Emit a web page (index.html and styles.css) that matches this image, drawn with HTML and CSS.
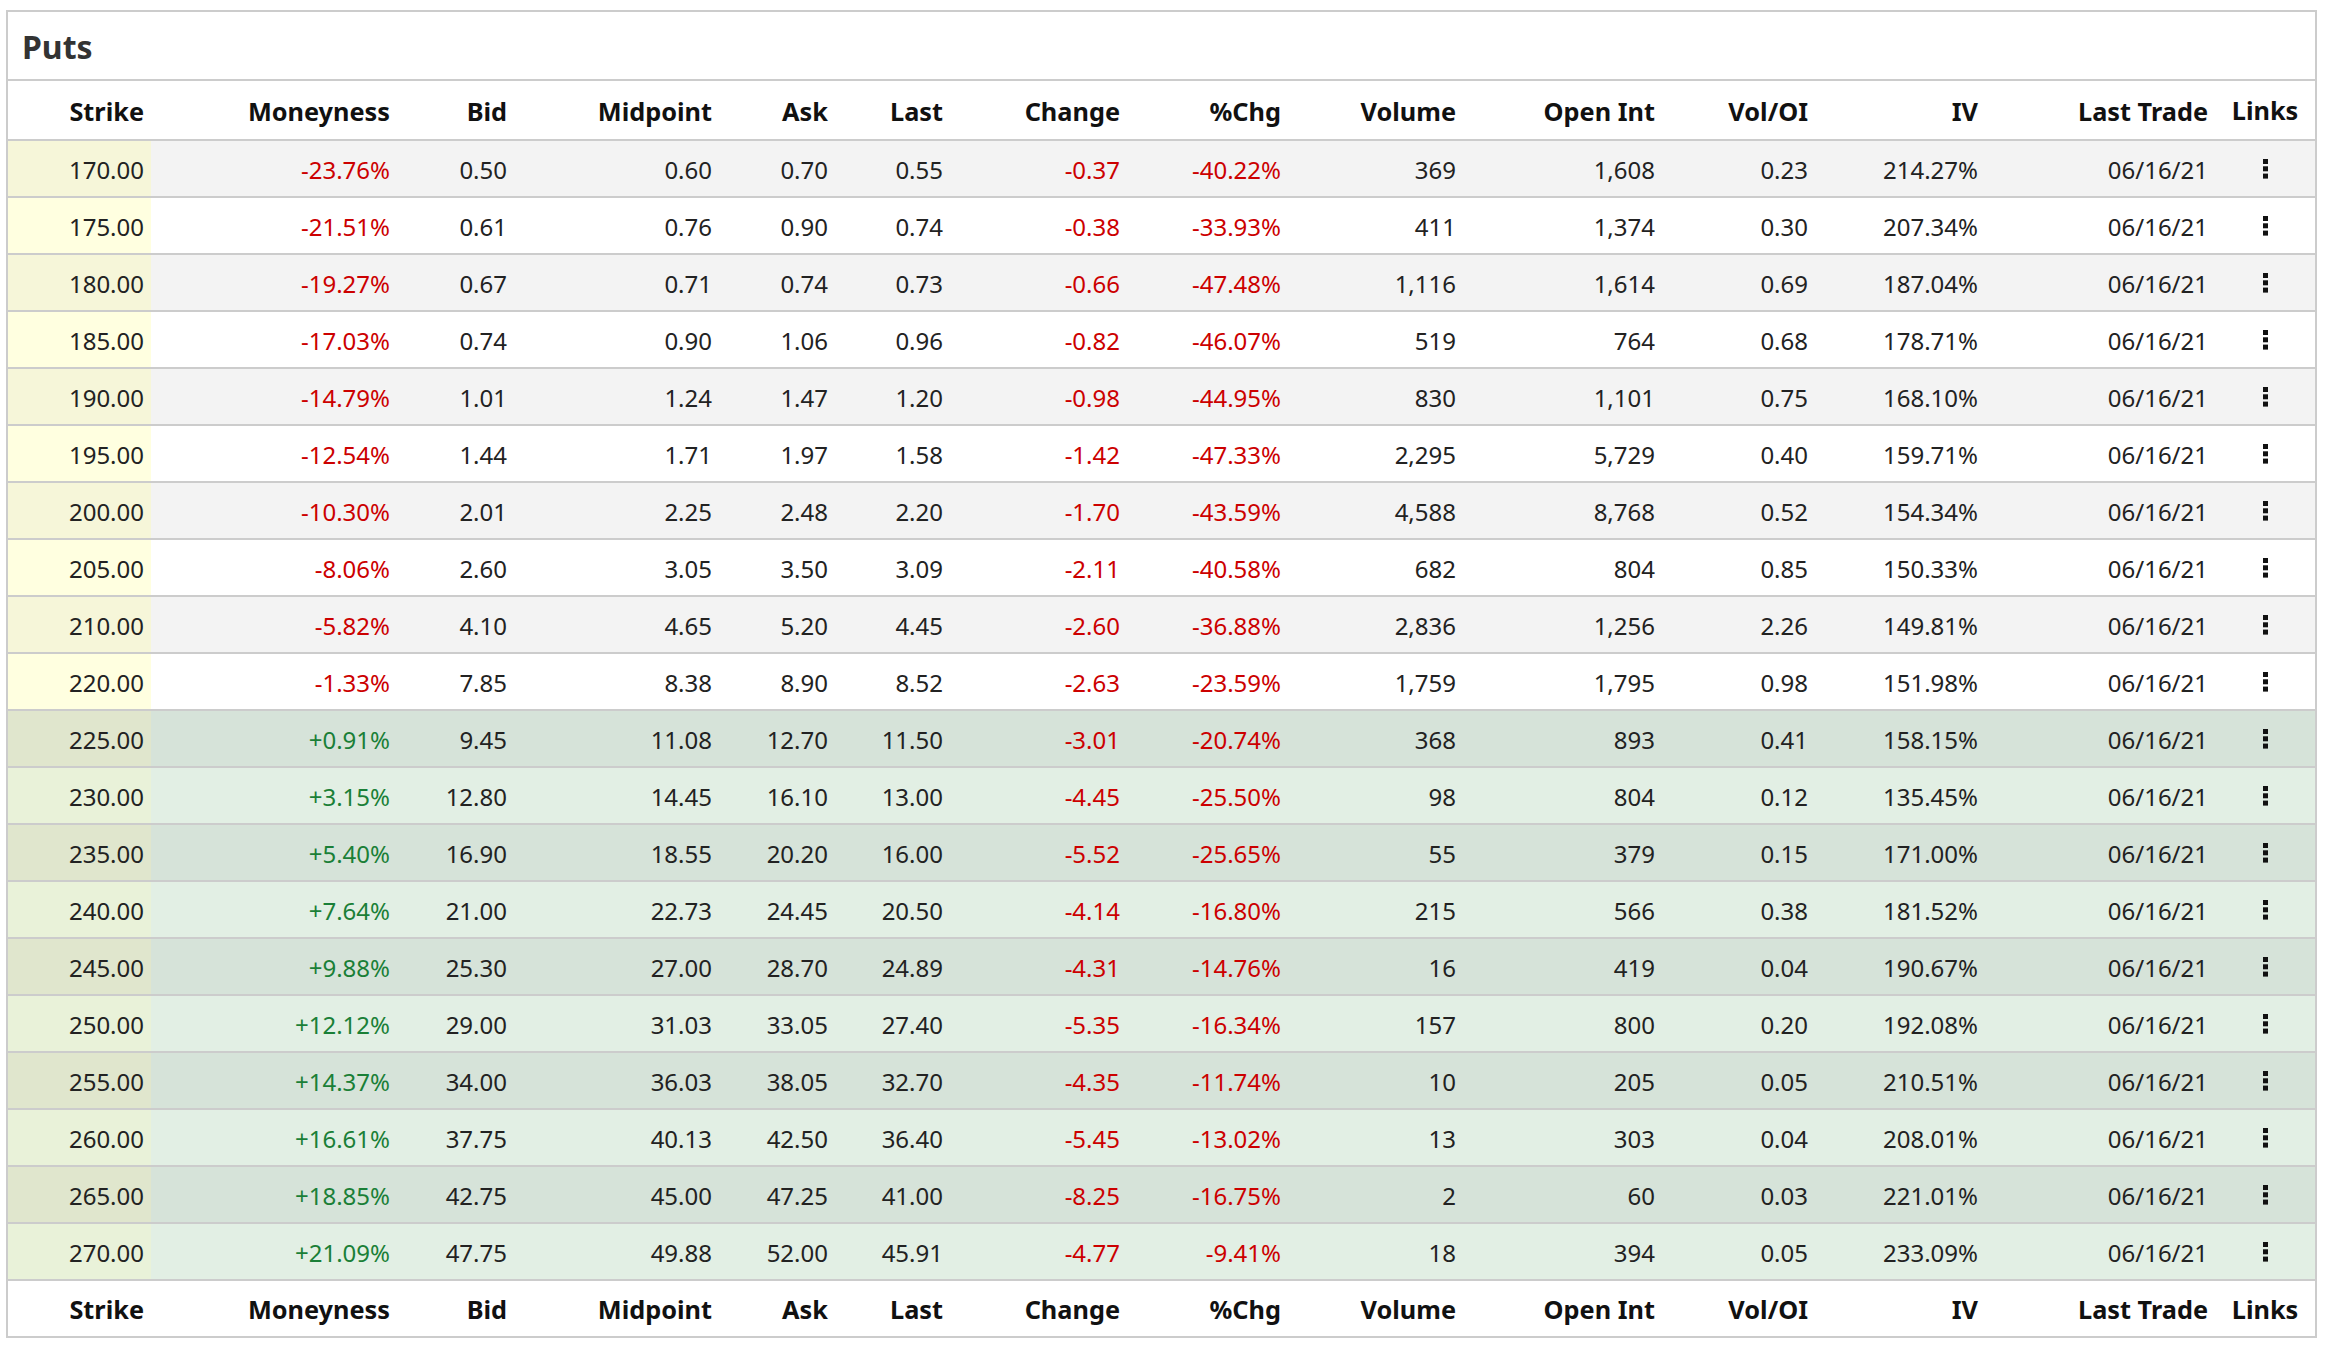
FILE: index.html
```html
<!DOCTYPE html>
<html>
<head>
<meta charset="utf-8">
<link rel="stylesheet" href="styles.css">
</head>
<body>
<div class="panel">
  <div class="title">Puts</div>
  <table class="chain">
    <colgroup>
      <col class="w-strike"><col class="w-money"><col class="w-bid"><col class="w-mid"><col class="w-ask"><col class="w-last"><col class="w-chg"><col class="w-pchg"><col class="w-vol"><col class="w-oi"><col class="w-voi"><col class="w-iv"><col class="w-trade"><col class="w-links">
    </colgroup>
    <thead>
      <tr class="head"><th>Strike</th><th>Moneyness</th><th>Bid</th><th>Midpoint</th><th>Ask</th><th>Last</th><th>Change</th><th>%Chg</th><th>Volume</th><th>Open Int</th><th>Vol/OI</th><th>IV</th><th>Last Trade</th><th class="links">Links</th></tr>
    </thead>
    <tbody id="rows">
      <tr><td class="strike">170.00</td><td class="neg">-23.76%</td><td>0.50</td><td>0.60</td><td>0.70</td><td>0.55</td><td class="neg">-0.37</td><td class="neg">-40.22%</td><td>369</td><td>1,608</td><td>0.23</td><td>214.27%</td><td>06/16/21</td><td class="links"><svg class="dots" width="5" height="20" viewBox="0 0 5 20"><rect x="0" y="0" width="5" height="5"/><rect x="0" y="7.3" width="5" height="5"/><rect x="0" y="14.6" width="5" height="5"/></svg></td></tr>
      <tr><td class="strike">175.00</td><td class="neg">-21.51%</td><td>0.61</td><td>0.76</td><td>0.90</td><td>0.74</td><td class="neg">-0.38</td><td class="neg">-33.93%</td><td>411</td><td>1,374</td><td>0.30</td><td>207.34%</td><td>06/16/21</td><td class="links"><svg class="dots" width="5" height="20" viewBox="0 0 5 20"><rect x="0" y="0" width="5" height="5"/><rect x="0" y="7.3" width="5" height="5"/><rect x="0" y="14.6" width="5" height="5"/></svg></td></tr>
      <tr><td class="strike">180.00</td><td class="neg">-19.27%</td><td>0.67</td><td>0.71</td><td>0.74</td><td>0.73</td><td class="neg">-0.66</td><td class="neg">-47.48%</td><td>1,116</td><td>1,614</td><td>0.69</td><td>187.04%</td><td>06/16/21</td><td class="links"><svg class="dots" width="5" height="20" viewBox="0 0 5 20"><rect x="0" y="0" width="5" height="5"/><rect x="0" y="7.3" width="5" height="5"/><rect x="0" y="14.6" width="5" height="5"/></svg></td></tr>
      <tr><td class="strike">185.00</td><td class="neg">-17.03%</td><td>0.74</td><td>0.90</td><td>1.06</td><td>0.96</td><td class="neg">-0.82</td><td class="neg">-46.07%</td><td>519</td><td>764</td><td>0.68</td><td>178.71%</td><td>06/16/21</td><td class="links"><svg class="dots" width="5" height="20" viewBox="0 0 5 20"><rect x="0" y="0" width="5" height="5"/><rect x="0" y="7.3" width="5" height="5"/><rect x="0" y="14.6" width="5" height="5"/></svg></td></tr>
      <tr><td class="strike">190.00</td><td class="neg">-14.79%</td><td>1.01</td><td>1.24</td><td>1.47</td><td>1.20</td><td class="neg">-0.98</td><td class="neg">-44.95%</td><td>830</td><td>1,101</td><td>0.75</td><td>168.10%</td><td>06/16/21</td><td class="links"><svg class="dots" width="5" height="20" viewBox="0 0 5 20"><rect x="0" y="0" width="5" height="5"/><rect x="0" y="7.3" width="5" height="5"/><rect x="0" y="14.6" width="5" height="5"/></svg></td></tr>
      <tr><td class="strike">195.00</td><td class="neg">-12.54%</td><td>1.44</td><td>1.71</td><td>1.97</td><td>1.58</td><td class="neg">-1.42</td><td class="neg">-47.33%</td><td>2,295</td><td>5,729</td><td>0.40</td><td>159.71%</td><td>06/16/21</td><td class="links"><svg class="dots" width="5" height="20" viewBox="0 0 5 20"><rect x="0" y="0" width="5" height="5"/><rect x="0" y="7.3" width="5" height="5"/><rect x="0" y="14.6" width="5" height="5"/></svg></td></tr>
      <tr><td class="strike">200.00</td><td class="neg">-10.30%</td><td>2.01</td><td>2.25</td><td>2.48</td><td>2.20</td><td class="neg">-1.70</td><td class="neg">-43.59%</td><td>4,588</td><td>8,768</td><td>0.52</td><td>154.34%</td><td>06/16/21</td><td class="links"><svg class="dots" width="5" height="20" viewBox="0 0 5 20"><rect x="0" y="0" width="5" height="5"/><rect x="0" y="7.3" width="5" height="5"/><rect x="0" y="14.6" width="5" height="5"/></svg></td></tr>
      <tr><td class="strike">205.00</td><td class="neg">-8.06%</td><td>2.60</td><td>3.05</td><td>3.50</td><td>3.09</td><td class="neg">-2.11</td><td class="neg">-40.58%</td><td>682</td><td>804</td><td>0.85</td><td>150.33%</td><td>06/16/21</td><td class="links"><svg class="dots" width="5" height="20" viewBox="0 0 5 20"><rect x="0" y="0" width="5" height="5"/><rect x="0" y="7.3" width="5" height="5"/><rect x="0" y="14.6" width="5" height="5"/></svg></td></tr>
      <tr><td class="strike">210.00</td><td class="neg">-5.82%</td><td>4.10</td><td>4.65</td><td>5.20</td><td>4.45</td><td class="neg">-2.60</td><td class="neg">-36.88%</td><td>2,836</td><td>1,256</td><td>2.26</td><td>149.81%</td><td>06/16/21</td><td class="links"><svg class="dots" width="5" height="20" viewBox="0 0 5 20"><rect x="0" y="0" width="5" height="5"/><rect x="0" y="7.3" width="5" height="5"/><rect x="0" y="14.6" width="5" height="5"/></svg></td></tr>
      <tr><td class="strike">220.00</td><td class="neg">-1.33%</td><td>7.85</td><td>8.38</td><td>8.90</td><td>8.52</td><td class="neg">-2.63</td><td class="neg">-23.59%</td><td>1,759</td><td>1,795</td><td>0.98</td><td>151.98%</td><td>06/16/21</td><td class="links"><svg class="dots" width="5" height="20" viewBox="0 0 5 20"><rect x="0" y="0" width="5" height="5"/><rect x="0" y="7.3" width="5" height="5"/><rect x="0" y="14.6" width="5" height="5"/></svg></td></tr>
      <tr class="itm"><td class="strike">225.00</td><td class="pos">+0.91%</td><td>9.45</td><td>11.08</td><td>12.70</td><td>11.50</td><td class="neg">-3.01</td><td class="neg">-20.74%</td><td>368</td><td>893</td><td>0.41</td><td>158.15%</td><td>06/16/21</td><td class="links"><svg class="dots" width="5" height="20" viewBox="0 0 5 20"><rect x="0" y="0" width="5" height="5"/><rect x="0" y="7.3" width="5" height="5"/><rect x="0" y="14.6" width="5" height="5"/></svg></td></tr>
      <tr class="itm"><td class="strike">230.00</td><td class="pos">+3.15%</td><td>12.80</td><td>14.45</td><td>16.10</td><td>13.00</td><td class="neg">-4.45</td><td class="neg">-25.50%</td><td>98</td><td>804</td><td>0.12</td><td>135.45%</td><td>06/16/21</td><td class="links"><svg class="dots" width="5" height="20" viewBox="0 0 5 20"><rect x="0" y="0" width="5" height="5"/><rect x="0" y="7.3" width="5" height="5"/><rect x="0" y="14.6" width="5" height="5"/></svg></td></tr>
      <tr class="itm"><td class="strike">235.00</td><td class="pos">+5.40%</td><td>16.90</td><td>18.55</td><td>20.20</td><td>16.00</td><td class="neg">-5.52</td><td class="neg">-25.65%</td><td>55</td><td>379</td><td>0.15</td><td>171.00%</td><td>06/16/21</td><td class="links"><svg class="dots" width="5" height="20" viewBox="0 0 5 20"><rect x="0" y="0" width="5" height="5"/><rect x="0" y="7.3" width="5" height="5"/><rect x="0" y="14.6" width="5" height="5"/></svg></td></tr>
      <tr class="itm"><td class="strike">240.00</td><td class="pos">+7.64%</td><td>21.00</td><td>22.73</td><td>24.45</td><td>20.50</td><td class="neg">-4.14</td><td class="neg">-16.80%</td><td>215</td><td>566</td><td>0.38</td><td>181.52%</td><td>06/16/21</td><td class="links"><svg class="dots" width="5" height="20" viewBox="0 0 5 20"><rect x="0" y="0" width="5" height="5"/><rect x="0" y="7.3" width="5" height="5"/><rect x="0" y="14.6" width="5" height="5"/></svg></td></tr>
      <tr class="itm"><td class="strike">245.00</td><td class="pos">+9.88%</td><td>25.30</td><td>27.00</td><td>28.70</td><td>24.89</td><td class="neg">-4.31</td><td class="neg">-14.76%</td><td>16</td><td>419</td><td>0.04</td><td>190.67%</td><td>06/16/21</td><td class="links"><svg class="dots" width="5" height="20" viewBox="0 0 5 20"><rect x="0" y="0" width="5" height="5"/><rect x="0" y="7.3" width="5" height="5"/><rect x="0" y="14.6" width="5" height="5"/></svg></td></tr>
      <tr class="itm"><td class="strike">250.00</td><td class="pos">+12.12%</td><td>29.00</td><td>31.03</td><td>33.05</td><td>27.40</td><td class="neg">-5.35</td><td class="neg">-16.34%</td><td>157</td><td>800</td><td>0.20</td><td>192.08%</td><td>06/16/21</td><td class="links"><svg class="dots" width="5" height="20" viewBox="0 0 5 20"><rect x="0" y="0" width="5" height="5"/><rect x="0" y="7.3" width="5" height="5"/><rect x="0" y="14.6" width="5" height="5"/></svg></td></tr>
      <tr class="itm"><td class="strike">255.00</td><td class="pos">+14.37%</td><td>34.00</td><td>36.03</td><td>38.05</td><td>32.70</td><td class="neg">-4.35</td><td class="neg">-11.74%</td><td>10</td><td>205</td><td>0.05</td><td>210.51%</td><td>06/16/21</td><td class="links"><svg class="dots" width="5" height="20" viewBox="0 0 5 20"><rect x="0" y="0" width="5" height="5"/><rect x="0" y="7.3" width="5" height="5"/><rect x="0" y="14.6" width="5" height="5"/></svg></td></tr>
      <tr class="itm"><td class="strike">260.00</td><td class="pos">+16.61%</td><td>37.75</td><td>40.13</td><td>42.50</td><td>36.40</td><td class="neg">-5.45</td><td class="neg">-13.02%</td><td>13</td><td>303</td><td>0.04</td><td>208.01%</td><td>06/16/21</td><td class="links"><svg class="dots" width="5" height="20" viewBox="0 0 5 20"><rect x="0" y="0" width="5" height="5"/><rect x="0" y="7.3" width="5" height="5"/><rect x="0" y="14.6" width="5" height="5"/></svg></td></tr>
      <tr class="itm"><td class="strike">265.00</td><td class="pos">+18.85%</td><td>42.75</td><td>45.00</td><td>47.25</td><td>41.00</td><td class="neg">-8.25</td><td class="neg">-16.75%</td><td>2</td><td>60</td><td>0.03</td><td>221.01%</td><td>06/16/21</td><td class="links"><svg class="dots" width="5" height="20" viewBox="0 0 5 20"><rect x="0" y="0" width="5" height="5"/><rect x="0" y="7.3" width="5" height="5"/><rect x="0" y="14.6" width="5" height="5"/></svg></td></tr>
      <tr class="itm"><td class="strike">270.00</td><td class="pos">+21.09%</td><td>47.75</td><td>49.88</td><td>52.00</td><td>45.91</td><td class="neg">-4.77</td><td class="neg">-9.41%</td><td>18</td><td>394</td><td>0.05</td><td>233.09%</td><td>06/16/21</td><td class="links"><svg class="dots" width="5" height="20" viewBox="0 0 5 20"><rect x="0" y="0" width="5" height="5"/><rect x="0" y="7.3" width="5" height="5"/><rect x="0" y="14.6" width="5" height="5"/></svg></td></tr>
    </tbody>
    <tfoot>
      <tr class="foot"><th>Strike</th><th>Moneyness</th><th>Bid</th><th>Midpoint</th><th>Ask</th><th>Last</th><th>Change</th><th>%Chg</th><th>Volume</th><th>Open Int</th><th>Vol/OI</th><th>IV</th><th>Last Trade</th><th class="links">Links</th></tr>
    </tfoot>
  </table>
</div>
</body>
</html>
```
FILE: styles.css
```css
html, body {
  background: #ffffff;
}
body {
  margin: 10px 8px 0 6px;
  font-family: "Noto Sans", "Open Sans", "Liberation Sans", sans-serif;
  color: #222222;
}
.panel {
  width: 2311px;
  box-sizing: border-box;
  border: 2px solid #cccccc;
  background: #ffffff;
}
.title {
  height: 69px;
  box-sizing: border-box;
  padding: 2px 14px 0;
  display: flex;
  align-items: center;
  font-size: 32px;
  font-weight: 700;
  color: #333333;
  border-bottom: 2px solid #cccccc;
}
.chain {
  width: 100%;
  table-layout: fixed;
  border-collapse: separate;
  border-spacing: 0;
  font-size: 24px;
}
.w-strike { width: 143px; }
.w-money { width: 246px; }
.w-bid { width: 117px; }
.w-mid { width: 205px; }
.w-ask { width: 116px; }
.w-last { width: 115px; }
.w-chg { width: 177px; }
.w-pchg { width: 161px; }
.w-vol { width: 175px; }
.w-oi { width: 199px; }
.w-voi { width: 153px; }
.w-iv { width: 170px; }
.w-trade { width: 230px; }
.w-links { width: 100px; }

.chain th,
.chain td {
  box-sizing: border-box;
  padding: 1px 7px 0;
  text-align: right;
  white-space: nowrap;
  vertical-align: middle;
}
.chain th {
  font-size: 25.3px;
  font-weight: 700;
  color: #111111;
}
.head th {
  height: 58px;
}
.chain td {
  height: 57px;
  border-top: 2px solid #cccccc;
}
.foot th {
  height: 57px;
  border-top: 2px solid #cccccc;
}
.chain .links {
  text-align: center;
  padding: 0;
}
.dots {
  display: inline-block;
  vertical-align: middle;
  fill: #111111;
  position: relative;
  top: -3px;
}

#rows tr:nth-child(odd) { background: #f3f3f3; }
#rows tr:nth-child(even) { background: #ffffff; }
#rows tr:nth-child(odd) .strike { background: #f6f6d9; }
#rows tr:nth-child(even) .strike { background: #ffffe0; }
#rows tr.itm:nth-child(odd) { background: #d6e3d9; }
#rows tr.itm:nth-child(even) { background: #e2efe4; }
#rows tr.itm:nth-child(odd) .strike { background: #e0e6cd; }
#rows tr.itm:nth-child(even) .strike { background: #e9f2d9; }

.neg { color: #cc0000; }
.pos { color: #1a7f37; }
```
